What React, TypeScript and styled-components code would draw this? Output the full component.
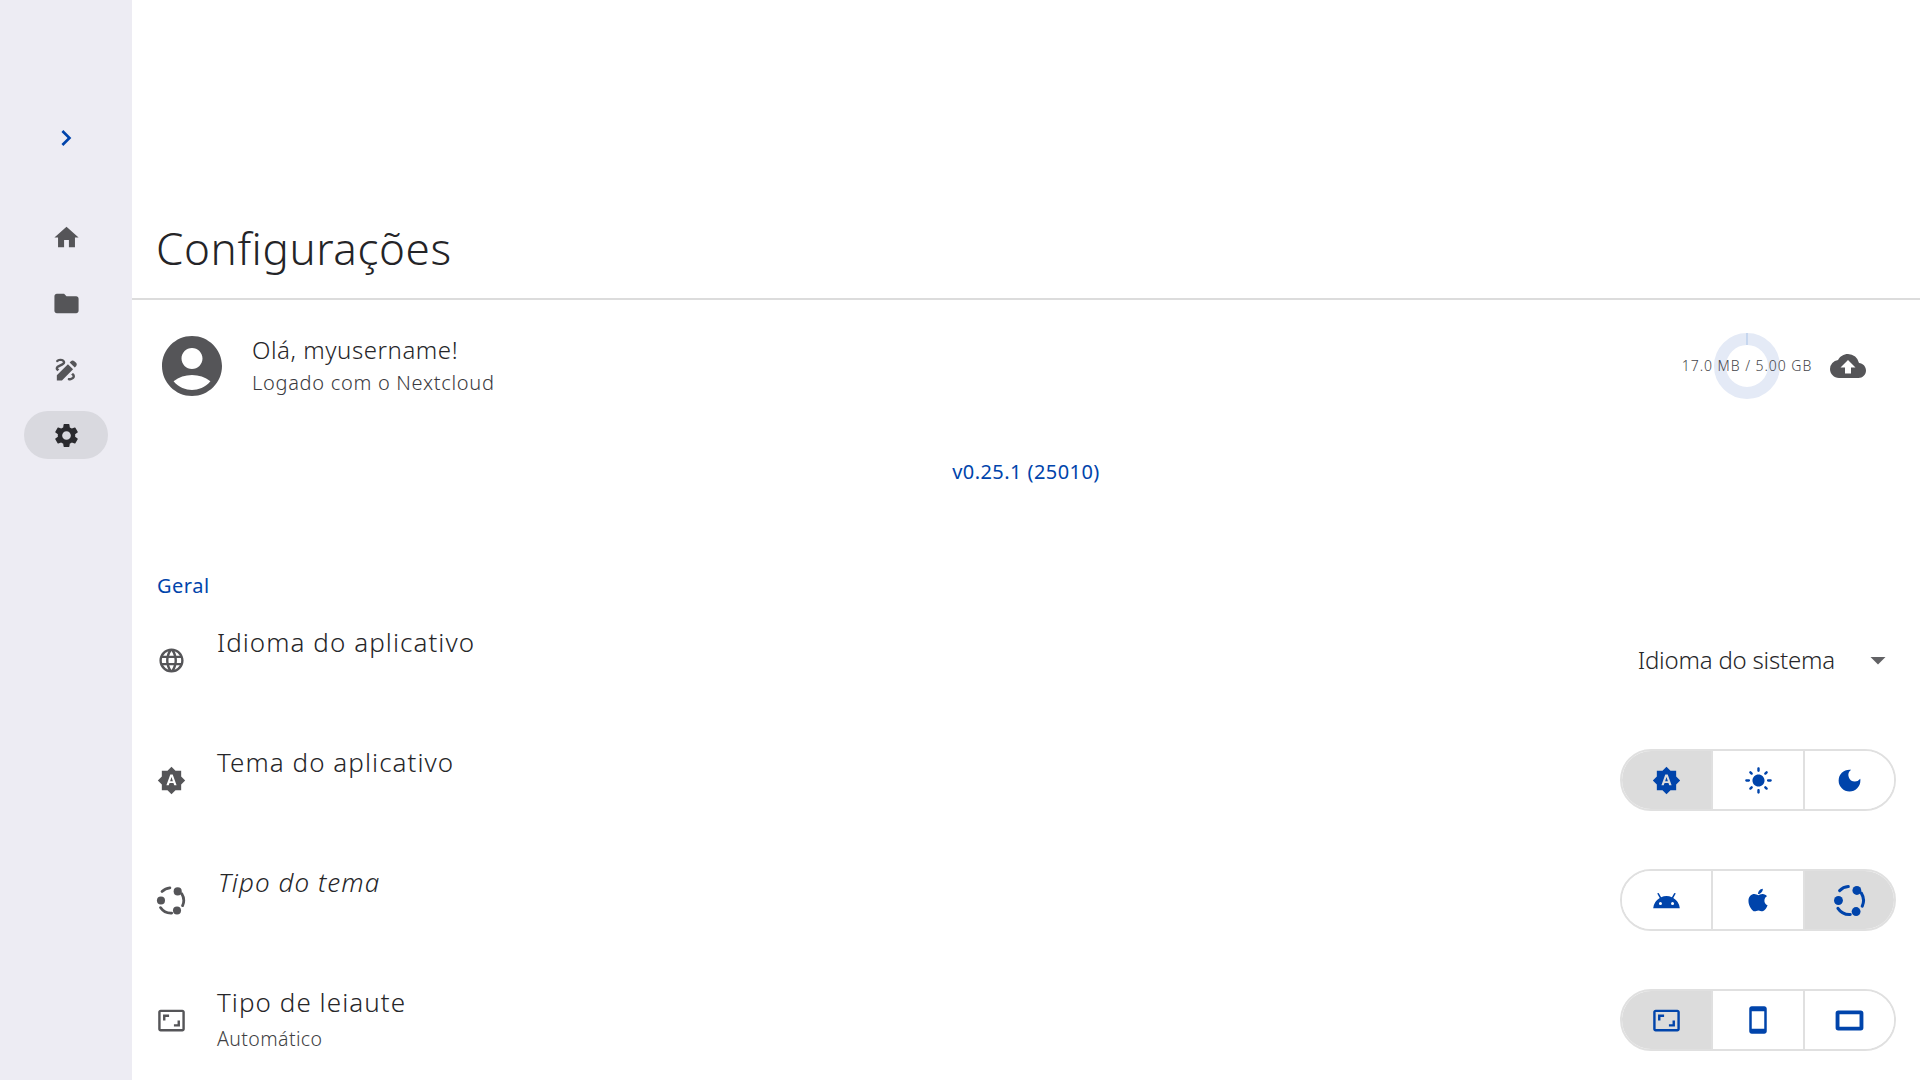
import React from "react";
import styled, { createGlobalStyle } from "styled-components";
import {
  MdChevronRight, MdHome, MdFolder, MdDraw, MdSettings, MdAccountCircle, MdCloudUpload,
  MdLanguage, MdBrightnessAuto, MdLightMode, MdDarkMode, MdAspectRatio, MdSmartphone, MdArrowDropDown,
} from "react-icons/md";
import { FaApple } from "react-icons/fa";

const BLUE = "#0044ab";
const FONT = `"Noto Sans", "Open Sans", sans-serif`;

const Global = createGlobalStyle`
  html, body { margin: 0; height: 100%; background: #fff; overflow: hidden; }
  body { font-family: ${FONT}; font-weight: 300; color: #262629; }
  * { box-sizing: border-box; }
`;

const Shell = styled.div`
  display: grid;
  grid-template-columns: 132px 1fr;
  height: 1080px;
  width: 1920px;
`;
const Sidebar = styled.nav`
  background: #edecf3;
  display: flex;
  flex-direction: column;
  align-items: center;
  padding-top: 117px;
`;
const Toggle = styled.div`
  height: 42px;
  display: flex;
  align-items: center;
  color: ${BLUE};
  margin-bottom: 54px;
`;
const NavItem = styled.div<{ $active?: boolean }>`
  width: 84px;
  height: 48px;
  margin-bottom: 18px;
  border-radius: 24px;
  display: flex;
  align-items: center;
  justify-content: center;
  color: ${(p) => (p.$active ? "#2a2a2e" : "#555558")};
  background: ${(p) => (p.$active ? "#d9d9df" : "transparent")};
`;
const Main = styled.main`
  display: flex;
  flex-direction: column;
  min-width: 0;
`;
const Header = styled.header`
  height: 300px;
  border-bottom: 2px solid #dcdcdc;
  padding: 0 0 27px 24px;
  display: flex;
  align-items: flex-end;
`;
const Title = styled.h1`
  margin: 0;
  font-size: 44px;
  line-height: 46px;
  font-weight: 300;
  letter-spacing: 0.6px;
  color: #242427;
`;
const Profile = styled.section`
  height: 131px;
  display: flex;
  align-items: center;
  padding: 0 54px 0 24px;
`;
const AvatarIcon = styled(MdAccountCircle)`
  color: #555558;
  flex: none;
`;
const Greeting = styled.div`
  margin-left: 24px;
  padding-top: 2px;
  flex: 1;
  display: flex;
  flex-direction: column;
  gap: 5px;
`;
const Hello = styled.div`
  font-size: 24px;
  line-height: 28px;
  letter-spacing: 0.55px;
`;
const Sub = styled.div`
  font-size: 20px;
  line-height: 28px;
  letter-spacing: 0.7px;
  color: #3a3a3e;
`;
const Storage = styled.div`
  position: relative;
  width: 66px;
  height: 66px;
  margin-right: 50px;
  display: flex;
`;
const StorageText = styled.span`
  position: absolute;
  left: 50%;
  top: 50%;
  margin-top: -1px;
  transform: translate(-50%, -50%);
  white-space: nowrap;
  font-size: 14px;
  letter-spacing: 0.95px;
  color: #454549;
`;
const CloudIcon = styled(MdCloudUpload)`
  color: #555558;
`;
const Version = styled.div`
  height: 80px;
  display: flex;
  align-items: center;
  justify-content: center;
  font-size: 20px;
  letter-spacing: 0.43px;
  color: ${BLUE};
  font-weight: 400;
`;
const SectionLabel = styled.div`
  padding: 61px 0 0 25px;
  font-size: 20px;
  line-height: 28px;
  color: ${BLUE};
  font-weight: 400;
  letter-spacing: 0.5px;
`;
const Row = styled.div`
  height: 120px;
  padding: 0 24px;
  display: flex;
  align-items: center;
`;
const RowIcon = styled.div`
  width: 30px;
  display: flex;
  justify-content: center;
  color: #555558;
  flex: none;
`;
const RowText = styled.div`
  align-self: flex-start;
  margin-left: 31px;
  padding-top: 26px;
  flex: 1;
`;
const RowTitle = styled.div<{ $italic?: boolean }>`
  font-size: 26px;
  line-height: 32px;
  letter-spacing: 1.05px;
  font-style: ${(p) => (p.$italic ? "italic" : "normal")};
  padding-left: ${(p) => (p.$italic ? "1px" : "0")};
  color: #262629;
`;
const RowSub = styled.div`
  font-size: 19.5px;
  line-height: 28px;
  margin-top: 7px;
  letter-spacing: 0.4px;
  color: #3f3f43;
`;
const Select = styled.div`
  display: flex;
  align-items: center;
  font-size: 24px;
  letter-spacing: -0.2px;
  color: #262629;
  gap: 25px;
`;
const SelectLabel = styled.span`
  padding-bottom: 2px;
`;
const SelectArrow = styled(MdArrowDropDown)`
  color: #626265;
`;
const Segments = styled.div`
  width: 276px;
  height: 62px;
  border: 2px solid #e0e0e0;
  border-radius: 31px;
  overflow: hidden;
  display: grid;
  grid-template-columns: 89px 92px 1fr;
`;
const Segment = styled.div<{ $on?: boolean }>`
  display: flex;
  align-items: center;
  justify-content: center;
  color: ${BLUE};
  background: ${(p) => (p.$on ? "#dcdcdc" : "#fff")};
  & + & { border-left: 2px solid #e0e0e0; }
`;

const pt = (deg: number, r: number) => {
  const a = (deg * Math.PI) / 180;
  return `${(r * Math.cos(a)).toFixed(2)} ${(r * Math.sin(a)).toFixed(2)}`;
};
const arc = (a: number, b: number, r: number) => `M${pt(a, r)}A${r} ${r} 0 0 1 ${pt(b, r)}`;

const UbuntuIcon = ({ size = 33 }: { size?: number }) => (
  <svg width={size} height={size} viewBox="-13 -13 26 26" fill="currentColor">
    <g fill="none" stroke="currentColor" strokeWidth="2.4" strokeLinecap="round">
      <path d={arc(-32, 24, 11)} />
      <path d={arc(87, 146, 11)} />
      <path d={arc(225, 265, 11)} />
    </g>
    <circle cx="5.8" cy="-7.9" r="3.5" />
    <circle cx="-8.7" cy="0" r="3.5" />
    <circle cx="5.2" cy="8.7" r="3.5" />
  </svg>
);
const AndroidHead = ({ size = 29 }: { size?: number }) => (
  <svg width={size} height={size} viewBox="0 1.6 24 24" fill="currentColor">
    <path d="M17.6 11.48 19.44 8.3a.63.63 0 0 0-1.09-.63l-1.88 3.24a11.43 11.43 0 0 0-8.94 0L5.65 7.67a.63.63 0 0 0-1.09.63L6.4 11.48A10.81 10.81 0 0 0 1 20h22a10.81 10.81 0 0 0-5.4-8.52M7 17.25A1.25 1.25 0 1 1 8.25 16 1.25 1.25 0 0 1 7 17.25m10 0A1.25 1.25 0 1 1 18.25 16 1.25 1.25 0 0 1 17 17.25" />
  </svg>
);
const LandscapeIcon = () => (
  <svg width="29" height="29" viewBox="0 0 24 24" fill="none" stroke="currentColor" strokeWidth="3.2">
    <rect x="2.1" y="5.3" width="19.8" height="13.4" rx="0.6" />
  </svg>
);

export default function App() {
  return (
    <>
      <Global />
      <Shell>
        <Sidebar>
          <Toggle><MdChevronRight size={32} /></Toggle>
          <NavItem><MdHome size={29} /></NavItem>
          <NavItem><MdFolder size={29} /></NavItem>
          <NavItem><MdDraw size={29} /></NavItem>
          <NavItem $active><MdSettings size={29} /></NavItem>
        </Sidebar>
        <Main>
          <Header><Title>Configurações</Title></Header>
          <Profile>
            <AvatarIcon size={72} />
            <Greeting>
              <Hello>Olá, myusername!</Hello>
              <Sub>Logado com o Nextcloud</Sub>
            </Greeting>
            <Storage>
              <svg width="66" height="66" viewBox="0 0 66 66">
                <circle cx="33" cy="33" r="27" fill="none" stroke="#e4eaf6" strokeWidth="12" />
                <path d="M33 0v12" stroke="#a9c4e8" strokeWidth="1" />
              </svg>
              <StorageText>17.0 MB / 5.00 GB</StorageText>
            </Storage>
            <CloudIcon size={36} />
          </Profile>
          <Version>v0.25.1 (25010)</Version>
          <SectionLabel>Geral</SectionLabel>
          <Row>
            <RowIcon><MdLanguage size={29} /></RowIcon>
            <RowText><RowTitle>Idioma do aplicativo</RowTitle></RowText>
            <Select><SelectLabel>Idioma do sistema</SelectLabel><SelectArrow size={36} /></Select>
          </Row>
          <Row>
            <RowIcon><MdBrightnessAuto size={29} /></RowIcon>
            <RowText><RowTitle>Tema do aplicativo</RowTitle></RowText>
            <Segments>
              <Segment $on><MdBrightnessAuto size={29} /></Segment>
              <Segment><MdLightMode size={29} /></Segment>
              <Segment><MdDarkMode size={29} /></Segment>
            </Segments>
          </Row>
          <Row>
            <RowIcon><UbuntuIcon /></RowIcon>
            <RowText><RowTitle $italic>Tipo do tema</RowTitle></RowText>
            <Segments>
              <Segment><AndroidHead /></Segment>
              <Segment><FaApple size={26} /></Segment>
              <Segment $on><UbuntuIcon /></Segment>
            </Segments>
          </Row>
          <Row>
            <RowIcon><MdAspectRatio size={29} /></RowIcon>
            <RowText>
              <RowTitle>Tipo de leiaute</RowTitle>
              <RowSub>Automático</RowSub>
            </RowText>
            <Segments>
              <Segment $on><MdAspectRatio size={29} /></Segment>
              <Segment><MdSmartphone size={30} /></Segment>
              <Segment><LandscapeIcon /></Segment>
            </Segments>
          </Row>
        </Main>
      </Shell>
    </>
  );
}
